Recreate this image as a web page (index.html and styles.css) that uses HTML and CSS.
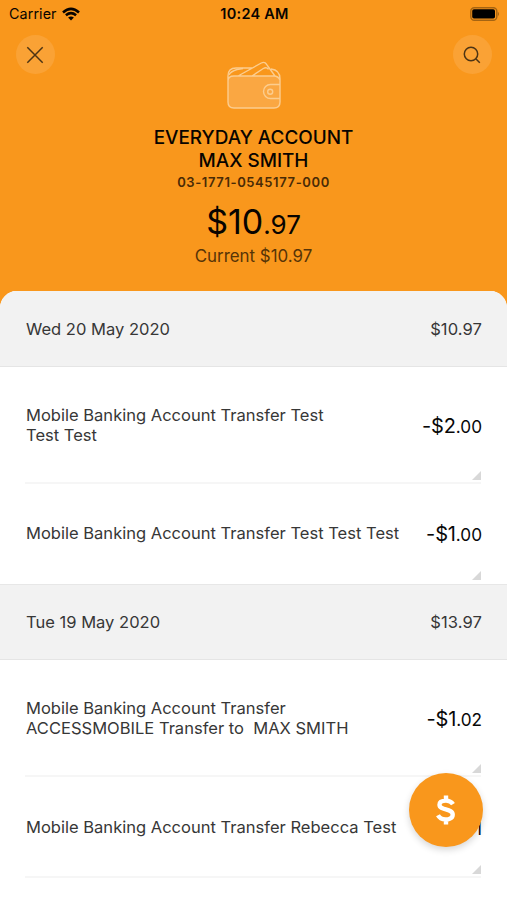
FILE: index.html
```html
<!DOCTYPE html>
<html lang="en">
<head>
<meta charset="utf-8">
<title>Everyday Account</title>
<link rel="stylesheet" href="styles.css">
</head>
<body>
<main class="screen">
  <header class="header">
    <div class="status">
      <div class="carrier"><span>Carrier</span>
        <svg width="18" height="14" viewBox="0 0 18 14" fill="none" stroke="#080400" stroke-width="2.6"><path d="M1 5.4Q9-1.5 17 5.4M3.9 8.3q5.1-4.2 10.2 0"/><path d="M9 13.5 6.1 10.6q2.9-2.2 5.8 0z" fill="#080400" stroke="none"/></svg>
      </div>
      <time class="clock">10:24 AM</time>
      <svg class="battery" width="31" height="14" viewBox="0 0 31 14"><rect x="1.8" y=".8" width="26" height="12.4" rx="3.5" fill="none" stroke="#a56412" stroke-width="1.4"/><rect x="3.2" y="2.3" width="22.8" height="9.2" rx="1.8" fill="#000"/><path d="M28.9 4.8q2.2 2.2 0 4.4z" fill="#a56412"/></svg>
    </div>
    <div class="tools">
      <button class="round" aria-label="Close"><svg width="18" height="18" viewBox="0 0 18 18"><path d="m1.3 1.3 15.4 15.4M16.7 1.3 1.3 16.7"/></svg></button>
      <svg class="wallet" width="54" height="48" viewBox="0 0 54 48"><path class="wallet-fill" d="M7 15h40q6 0 6 6v20q0 6-6 6H7q-6 0-6-6V21q0-6 6-6z"/><path d="M11 15 34.3 2q3.4-1.8 5.3 1.4L48 15M25 15l11.3-7.5q3.2-2 5.2.8M25 7H9Q1 7 1 15v26q0 6 6 6h40q6 0 6-6V18q0-9-9-10M1 20q0-5 6-5h40q4 0 6 4M53 23.5H43.5a7 7 0 0 0 0 14H53"/><path d="M2 14q1.500-3.500 8-5.500l6-1"/><circle cx="43.2" cy="30.7" r="2.5"/></svg>
      <button class="round" aria-label="Search"><svg width="18" height="18" viewBox="0 0 18 18"><circle cx="8" cy="8" r="6.7"/><path d="m12.8 12.8 4 4"/></svg></button>
    </div>
    <h1 class="name">EVERYDAY ACCOUNT<br>MAX SMITH</h1>
    <p class="number">03-1771-0545177-000</p>
    <p class="balance">$10<span>.97</span></p>
    <p class="current">Current $10.97</p>
  </header>
  <section class="list">
    <div class="day first"><span>Wed 20 May 2020</span><span class="sum">$10.97</span></div>
    <article class="row tall"><p>Mobile Banking Account Transfer Test<br>Test Test</p><strong>-$2<span>.00</span></strong></article>
    <article class="row last"><p>Mobile Banking Account Transfer Test Test Test</p><strong>-$1<span>.00</span></strong></article>
    <div class="day"><span>Tue 19 May 2020</span><span class="sum">$13.97</span></div>
    <article class="row tall"><p>Mobile Banking Account Transfer<br>ACCESSMOBILE Transfer to&nbsp; MAX SMITH</p><strong>-$1<span>.02</span></strong></article>
    <article class="row"><p>Mobile Banking Account Transfer Rebecca Test</p><strong>-$1<span>.01</span></strong></article>
  </section>
  <button class="fab" aria-label="Pay"><svg width="20" height="32" viewBox="0 0 20 32"><path d="M17 10.2Q14.8 6.6 10 6.6 3.5 6.6 3.5 10.8C3.5 17 16.7 13.8 16.7 20.7 16.7 25 11 25.8 9.5 25.4 5.5 25.3 3.2 23.6 2 21.3M10 1.5v5.5M10 25v5.5"/></svg></button>
</main>
</body>
</html>
```
FILE: styles.css
```css
* { box-sizing: border-box; }
body { margin: 0; background: #fff; font-family: Inter, "Liberation Sans", sans-serif; color: #373737; }
p, h1 { margin: 0; }
button { border: 0; padding: 0; display: grid; place-items: center; }
svg { display: block; }
.screen { position: relative; height: 900px; overflow: hidden; background: #f9971c; }
.header { height: 291px; text-align: center; color: #080400; }
.status { height: 27px; padding: 0 7px 0 9px; display: grid; grid-template-columns: 1fr auto 1fr; align-items: center; }
.carrier { display: flex; align-items: center; gap: 5px; font-size: 14.3px; letter-spacing: .1px; }
.clock { font-size: 14.5px; font-weight: 600; letter-spacing: .25px; }
.battery { justify-self: end; }
.tools { height: 99px; padding: 8px 15px 0 16px; display: flex; justify-content: space-between; align-items: flex-start; }
.round { width: 39px; height: 39px; border-radius: 50%; background: #faa235; }
.round svg { margin-right: 1px; fill: none; stroke: #4d3414; stroke-width: 1.5; }
.wallet { margin-top: 26px; fill: none; stroke: #fccd8f; stroke-width: 1.4; }
.wallet-fill { fill: #faa742; stroke: none; }
.name { font-size: 18.9px; line-height: 23px; font-weight: 500; }
.number { font-size: 13px; line-height: 21px; font-weight: 600; color: #492b06; letter-spacing: .6px; }
.balance { height: 52px; line-height: 58px; font-size: 34px; }
.balance span { font-size: 26px; }
.current { line-height: 22px; font-size: 16.9px; color: #573407; }
.list { height: 609px; border-radius: 17px 17px 0 0; overflow: hidden; background: #fff; font-size: 16.54px; }
.day { height: 76px; padding: 0 25px 0 26px; display: flex; justify-content: space-between; align-items: center; background: #f2f2f2; border-top: 1px solid #e7e7e7; border-bottom: 1px solid #e5e5e5; }
.day.first { border-top-color: #f2f2f2; }
.sum { letter-spacing: .1px; }
.row { position: relative; height: 101px; margin: 0 26px 0 25px; padding-left: 1px; display: flex; justify-content: space-between; align-items: center; border-bottom: 2px solid #f6f6f6; }
.row.tall { height: 117px; }
.row.last { height: 100px; border-bottom-color: #fff; }
.row p { padding-top: 1px; line-height: 20.5px; white-space: nowrap; }
.row strong { margin-right: -1px; padding-top: 2px; font-size: 20px; font-weight: 400; letter-spacing: -.15px; color: #080808; white-space: nowrap; }
.row strong span { font-size: 17.2px; letter-spacing: 0; }
.row::after { content: ""; position: absolute; right: 0; bottom: 2px; width: 9px; height: 9px; background: #d8d8d8; clip-path: polygon(100% 0, 100% 100%, 0 100%); }
.fab { position: absolute; left: 409px; top: 773px; width: 74px; height: 74px; border-radius: 50%; background: #f9971c; box-shadow: 0 3px 7px rgba(0, 0, 0, .16); }
.fab svg { fill: none; stroke: #fff; stroke-width: 4.4; }
```
